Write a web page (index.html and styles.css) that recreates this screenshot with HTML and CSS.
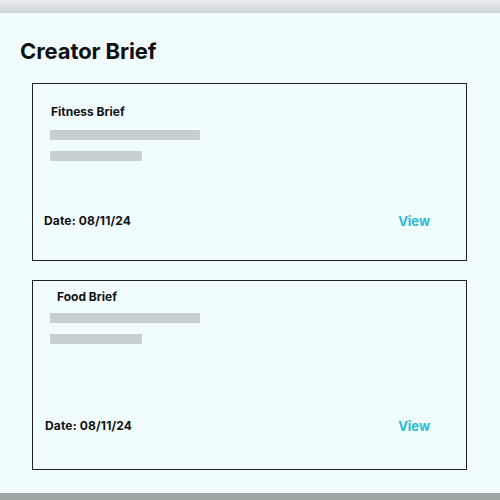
FILE: index.html
```html
<!DOCTYPE html>
<html>
<head>
<meta charset="utf-8">
<link rel="stylesheet" href="styles.css">
</head>
<body>
<div class="topbar"></div>
<main class="page">
  <h1 class="page-title">Creator Brief</h1>
  <div class="cards">
    <section class="card card-fitness">
      <h2 class="card-title">Fitness Brief</h2>
      <div class="bar bar-long"></div>
      <div class="bar bar-short"></div>
      <div class="card-footer">
        <span class="date">Date: 08/11/24</span>
        <a class="view">View</a>
      </div>
    </section>
    <section class="card card-food">
      <h2 class="card-title">Food Brief</h2>
      <div class="bar bar-long"></div>
      <div class="bar bar-short"></div>
      <div class="card-footer">
        <span class="date">Date: 08/11/24</span>
        <a class="view">View</a>
      </div>
    </section>
  </div>
</main>
<div class="bottombar"></div>
</body>
</html>
```
FILE: styles.css
```css
* { box-sizing: border-box; }
html, body { margin: 0; padding: 0; }
body {
  width: 500px;
  height: 500px;
  background: #f1fcfe;
  font-family: Inter, "Open Sans", sans-serif;
  color: #111;
  display: flex;
  flex-direction: column;
  overflow: hidden;
}
.topbar {
  height: 13px;
  flex: none;
  background: linear-gradient(#e9eff0, #cdd5d5);
}
.page {
  flex: 1;
  padding: 25px 0 0 0;
}
.page-title {
  margin: 0 0 0 20px;
  font-size: 22px;
  line-height: 26px;
  font-weight: 700;
  letter-spacing: -0.1px;
}
.cards {
  margin: 19px 0 0 32px;
  width: 435px;
  display: flex;
  flex-direction: column;
  gap: 19px;
}
.card {
  border: 1px solid #222;
  display: flex;
  flex-direction: column;
}
.card-fitness { height: 178px; padding: 18px 0 0 17px; }
.card-food { height: 190px; padding: 6px 0 0 17px; }
.card-title {
  margin: 0;
  font-size: 12px;
  line-height: 20px;
  font-weight: 700;
}
.card-fitness .card-title { padding-left: 1px; }
.card-food .card-title { padding-left: 7px; }
.bar {
  height: 10px;
  background: #c8cfd0;
}
.bar-long { width: 150px; }
.bar-short { width: 92px; margin-top: 11px; }
.card-fitness .bar-long { margin-top: 8px; }
.card-food .bar-long { margin-top: 6px; }
.card-footer {
  display: flex;
  justify-content: space-between;
  align-items: center;
  padding-right: 36px;
}
.card-fitness .card-footer { margin: 50px 0 0 -6px; }
.card-food .card-footer { margin: 72px 0 0 -5px; }
.date {
  font-size: 12px;
  line-height: 20px;
  font-weight: 700;
  letter-spacing: 0.15px;
}
.view {
  font-size: 13px;
  line-height: 20px;
  font-weight: 700;
  color: #2bbcd5;
}
.bottombar {
  height: 7px;
  flex: none;
  background: #a0a7a7;
}
```
